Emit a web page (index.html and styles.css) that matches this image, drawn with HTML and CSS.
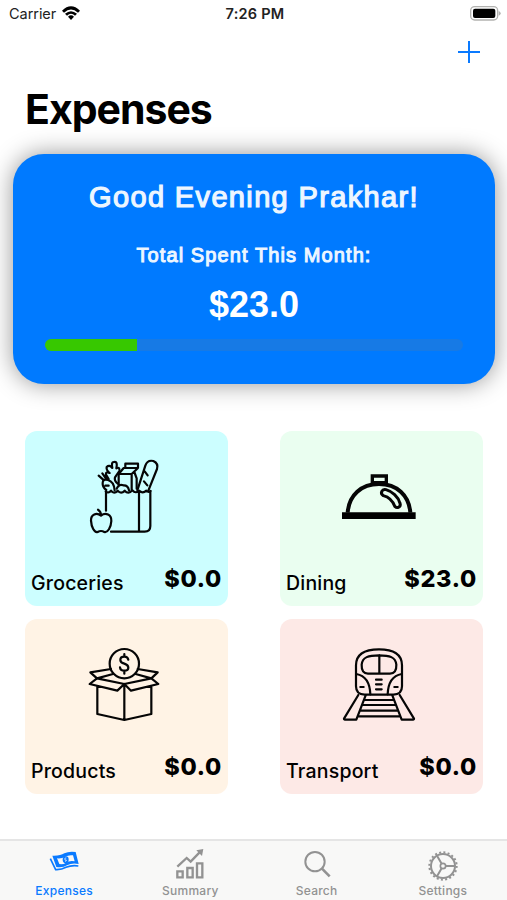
FILE: index.html
```html
<!DOCTYPE html>
<html lang="en">
<head>
<meta charset="utf-8">
<title>Expenses</title>
<link rel="stylesheet" href="styles.css">
</head>
<body>
<div class="app">
  <header class="status">
    <div class="carrier">
      <span>Carrier</span>
      <svg class="wifi" viewBox="0 0 54 42"><path d="M0 14Q27 -12 54 14L48 20Q27 1 6 20ZM9 23Q27 8 45 23L39 29Q27 18 15 29ZM18 32Q27 24 36 32L27 42Z"/></svg>
    </div>
    <span class="time">7:26 PM</span>
    <svg class="battery" viewBox="0 0 93 45"><rect x="2" y="2" width="81" height="40" rx="12" fill="#fff" stroke="#b2b2b0" stroke-width="4"/><rect x="9" y="8" width="67" height="28" rx="6"/><path d="M86 15q6 2 6 7t-6 7z" fill="#b2b2b0"/></svg>
  </header>
  <nav class="nav">
    <svg class="plus" viewBox="0 0 22 22"><path d="M11 0V22M0 11H22"/></svg>
  </nav>
  <h1 class="title">Expenses</h1>

  <section class="card">
    <div class="greeting">Good Evening Prakhar!</div>
    <div class="label">Total Spent This Month:</div>
    <div class="total">$23.0</div>
    <div class="bar"><div class="fill"></div></div>
  </section>

  <main class="grid">
    <article class="tile groceries">
      <svg class="art" viewBox="0 0 300 285">
        <path d="M93 182V126M108 245H209Q226 245 226 228V126M192 126V245"/>
        <path d="M92 124Q99 132 108 122Q117 134 128 122Q138 134 149 122Q160 134 172 121Q182 132 192 122Q203 132 214 122Q220 128 227 123"/>
        <path d="M187 121L211 47Q217 29 235 33Q251 40 246 57L220 122M209 64L218 76M207 94L217 106"/>
        <path d="M131 109V72L146 54H189V41H151V54M131 72H170L189 54M170 72V119M178 66L185 85V116M125 116Q132 100 145 106Q159 105 162 121"/>
        <path d="M128 101Q117 93 120 82L133 63Q135 49 124 55Q129 33 117 36Q108 35 112 54Q103 43 95 51Q93 60 104 69Q91 64 93 74L101 87M83 99Q83 86 99 90Q117 95 119 121M83 99Q82 112 94 120M71 77L87 91M82 70L94 87M91 107H101"/>
        <path d="M78 197C65 186 47 193 48 212C49 231 58 249 68 246Q78 240 88 246C98 249 108 232 109 213C110 194 92 186 78 197ZM78 196Q78 184 69 179"/>
      </svg>
      <div class="row"><span class="name">Groceries</span><span class="amount">$0.0</span></div>
    </article>
    <article class="tile dining">
      <svg class="art" viewBox="0 -30 300 285">
        <path d="M36 157H257V177H36Z" fill="#000" stroke="none"/>
        <path d="M53 158C57 105 94 72 147 72S237 105 241 158" stroke-width="12"/>
        <path d="M127 73V48H169V73M127 68H169" stroke-width="10"/>
        <path d="M168 89C186 94 205 110 210 130C214 142 201 145 195 140C187 119 176 111 160 107C149 100 156 86 168 89Z" stroke-width="9"/>
      </svg>
      <div class="row"><span class="name">Dining</span><span class="amount">$23.0</span></div>
    </article>
    <article class="tile products">
      <svg class="art" viewBox="0 -6 300 285">
        <circle cx="148" cy="71" r="44"/>
        <path d="M160 59Q158 50 148 50Q136 50 136 60Q136 68 148 71Q160 75 160 83Q160 92 148 92Q136 92 135 82M148 42V50M148 92V101"/>
        <path d="M108 87L46 97L66 115L44 132L127 152L148 132L168 152L250 132L229 115L248 97L188 87M66 115L148 132L229 115M66 115L114 102M229 115L182 102M67 140V222L148 240L229 222V140M148 134V240"/>
      </svg>
      <div class="row"><span class="name">Products</span><span class="amount">$0.0</span></div>
    </article>
    <article class="tile transport">
      <svg class="art" viewBox="0 -6 300 285">
        <path d="M78 139V76C78 42 103 28 147 28S216 42 216 76V139Q216 164 190 164H104Q78 164 78 139Z"/>
        <path d="M95 74C97 51 116 46 147 46S197 51 199 74Q200 101 180 101H114Q94 101 95 74ZM148 46V101M79 102Q119 109 121 163M215 102Q175 109 173 163M138 119H155M138 133H155M138 148H155M91 141H101M193 141H203"/>
        <path d="M85 165L42 236Q42 239 48 239H79L107 166M209 165L252 236Q252 239 246 239H215L187 166M103 180H191M97 195H197M91 212H203M85 229H209"/>
      </svg>
      <div class="row"><span class="name">Transport</span><span class="amount">$0.0</span></div>
    </article>
  </main>

  <footer class="tabs">
    <div class="tab active">
      <svg viewBox="0 0 90 90"><path fill-rule="evenodd" d="M10 20Q34 21 46 13Q60 6 80 9L89 45Q68 41 54 49Q42 57 22 54ZM24 28L31 45Q42 47 51 41Q62 34 77 37L72 19Q59 17 49 23Q37 30 24 28Z"/><ellipse cx="50" cy="32" rx="9" ry="10"/><path d="M52 27Q47 26 47 30T52 33Q53 37 48 37" fill="none" stroke="#fff" stroke-width="2"/><path d="M4 29L20 62Q37 63 51 55Q68 48 88 51" fill="none" stroke="currentColor" stroke-width="5"/></svg>
      <span>Expenses</span>
    </div>
    <div class="tab">
      <svg viewBox="0 0 90 90"><path d="M7 53L35 27L47 38L76 8" fill="none" stroke="currentColor" stroke-width="7"/><path d="M64 4L85 0L81 21Z"/><path d="M7 67H23V85H7ZM37 57H53V85H37ZM66 43H82V85H66Z" fill="none" stroke="currentColor" stroke-width="7"/></svg>
      <span>Summary</span>
    </div>
    <div class="tab">
      <svg viewBox="0 0 90 90"><g fill="none" stroke="currentColor"><circle cx="39" cy="38" r="29" stroke-width="6"/><path d="M60 59L83 82" stroke-width="8"/></g></svg>
      <span>Search</span>
    </div>
    <div class="tab">
      <svg class="gear" viewBox="0 0 90 90"><g fill="none" stroke="currentColor"><circle cx="45" cy="45" r="41" stroke-width="6" stroke-dasharray="6 6.88"/><circle cx="45" cy="45" r="36" stroke-width="6"/><circle cx="45" cy="45" r="8" stroke-width="5"/><path d="M53 45H80M41 38L27 14M41 52L27 76" stroke-width="6"/></g></svg>
      <span>Settings</span>
    </div>
  </footer>
</div>
</body>
</html>
```
FILE: styles.css
```css
* { box-sizing: border-box; }
body { margin: 0; background: #fff; color: #000; font-family: Inter, sans-serif; }
.app { width: 507px; height: 900px; display: flex; flex-direction: column; overflow: hidden; }
svg { display: block; }

.status { height: 28px; flex: none; display: grid; grid-template-columns: 1fr auto 1fr; align-items: center; padding: 0 6px 0 9px; font-size: 14.5px; color: #222; }
.carrier { display: flex; align-items: center; gap: 6px; margin-top: -1px; letter-spacing: -0.05px; }
.wifi { width: 18px; height: 14px; margin-top: -1px; fill: #000; }
.time { margin-top: -1px; font-weight: 600; font-size: 14.5px; letter-spacing: 0.25px; }
.battery { width: 31px; height: 15px; justify-self: end; margin-top: -1px; }

.nav { height: 49px; flex: none; display: flex; justify-content: flex-end; padding: 13px 27px 0 0; }
.plus { width: 22px; height: 22px; fill: none; stroke: #0a7aff; stroke-width: 2; }
.title { margin: 0; height: 77px; flex: none; padding: 7px 0 0 25px; font-size: 41px; line-height: 50px; font-weight: 700; letter-spacing: -1px; }

.card { height: 230px; flex: none; margin: 0 12px 0 13px; padding: 25px 32px 0; border-radius: 31px; background: #007aff; box-shadow: 0 0 24px rgba(0, 0, 0, 0.42); color: #fff; text-align: center; font-family: "Liberation Sans", Arial, sans-serif; }
.greeting { font-size: 29px; line-height: 36px; letter-spacing: 1.35px; color: #edf6ff; -webkit-text-stroke: 1.2px #edf6ff; }
.label { margin-top: 27px; font-size: 20px; line-height: 26px; letter-spacing: 1.1px; color: #edf6ff; -webkit-text-stroke: 1px #edf6ff; }
.total { margin-top: 16px; font-size: 36px; line-height: 42px; font-weight: 700; }
.bar { margin-top: 13px; height: 12px; border-radius: 6px; background: #177ae5; overflow: hidden; }
.fill { width: 92px; height: 100%; background: #37c800; }

.grid { flex: none; margin-top: 47px; padding: 0 24px 0 25px; display: grid; grid-template-columns: 203px 203px; justify-content: space-between; row-gap: 13px; }
.tile { height: 175px; border-radius: 12px; padding-top: 19px; display: flex; flex-direction: column; }
.groceries { background: #ccfeff; }
.dining { background: #eafef0; }
.products { background: #fff3e5; }
.transport { background: #fde9e6; }
.art { width: 100px; height: 95px; margin-left: 50px; fill: none; stroke: #050505; stroke-width: 6.6; stroke-linejoin: round; stroke-linecap: round; }
.dining .art { stroke-linecap: butt; stroke-linejoin: miter; }
.row { display: flex; justify-content: space-between; align-items: flex-start; padding: 20px 6px 0 6px; }
.name { margin-top: 5px; font-size: 19.5px; line-height: 26px; font-weight: 550; letter-spacing: 0.2px; }
.amount { font-size: 23.5px; line-height: 28px; font-weight: 850; letter-spacing: 0.7px; }

.tabs { margin-top: auto; height: 61px; flex: none; display: grid; grid-template-columns: repeat(4, 1fr); padding: 0 1px; border-top: 2px solid #e5e5e5; background: #f8f8f7; }
.tab { display: flex; flex-direction: column; align-items: center; padding-top: 8px; color: #929292; font-size: 12px; line-height: 16px; font-weight: 550; letter-spacing: 0.25px; }
.tab svg { width: 30px; height: 30px; fill: currentColor; }
.tab .gear { position: relative; top: 2px; }
.tab span { margin-top: 4px; }
.active { color: #0a7aff; }
```
